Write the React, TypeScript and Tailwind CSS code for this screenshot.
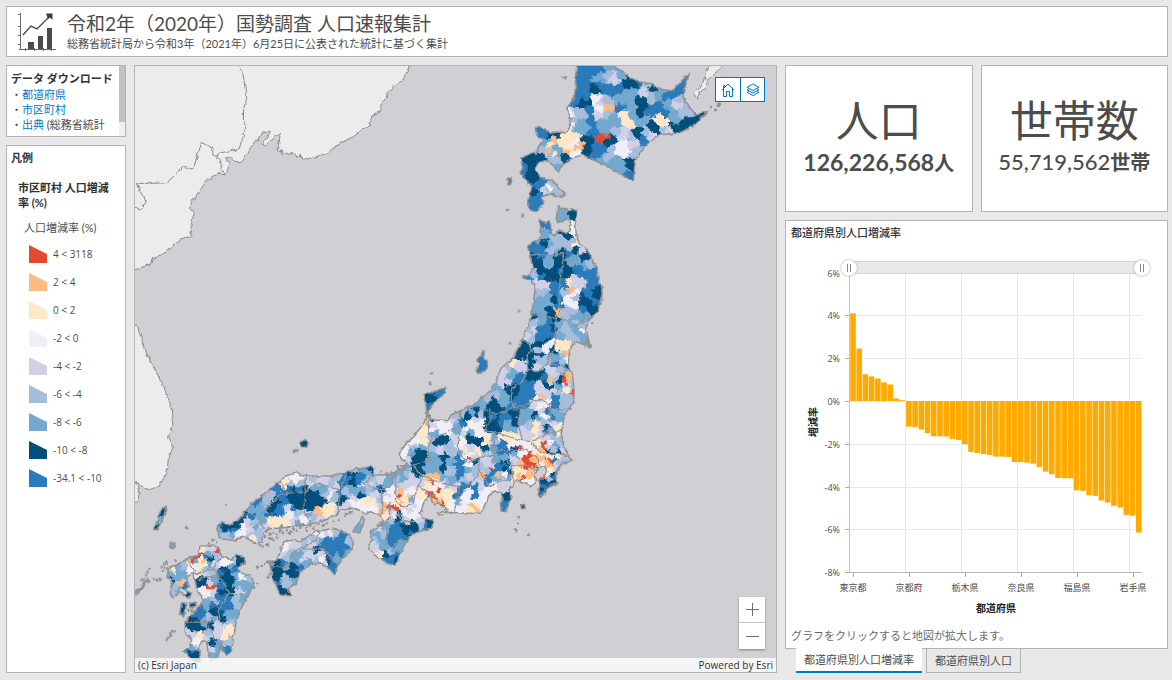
import React, { useMemo, useState } from "react";

type Point = [number, number];

const FILL: Record<string, string> = {
  R: "#e34a33",
  O: "#fdbb84",
  Y: "#fee8c8",
  W: "#f1eef6",
  L: "#d0d1e6",
  M: "#a6bddb",
  B: "#74a9cf",
  D: "#034e7b",
  N: "#2b7bba",
};

/* Relative reach of a municipality when cells are divided. */
const REACH: Record<string, number> = { R: 0.45, O: 0.75, Y: 0.95, W: 1.15, L: 1.1, M: 1.05, B: 1.05, D: 0.95, N: 1 };

const LEGEND = [
  ["R", "4 < 3118"],
  ["O", "2 < 4"],
  ["Y", "0 < 2"],
  ["W", "-2 < 0"],
  ["L", "-4 < -2"],
  ["M", "-6 < -4"],
  ["B", "-8 < -6"],
  ["D", "-10 < -8"],
  ["N", "-34.1 < -10"],
];

/* Map sheets: each has an origin on the map and is digitised at 3 units per map unit. */
const SHEET: Record<string, Point> = {
  A: [460, 60],
  B: [460, 230],
  C: [380, 370],
  D: [340, 440],
  E: [134, 440],
  F: [134, 60],
};

function trace(sheet: string, coords: string): Point[] {
  const [ox, oy] = SHEET[sheet];
  return coords
    .trim()
    .split(/\s+/)
    .map((pair) => {
      const [x, y] = pair.split(",").map(Number);
      return [ox + x / 3, oy + y / 3];
    });
}

const toPath = (pts: Point[], close = true) =>
  "M" + pts.map(([x, y]) => `${x.toFixed(1)} ${y.toFixed(1)}`).join("L") + (close ? "Z" : "");

const HONSHU: Point[] = [
  ...trace("A", "204,562 215,545 238,540 245,520 240,478 258,488 272,482 275,515 285,528 298,510 318,520 330,515 334,495 328,475 295,488 290,470 298,437 325,452 352,448 348,490 350,520 358,550 385,570 398,598"),
  ...trace("B", "412,120 422,165 428,190 418,235 405,255 395,262 385,275 378,300 388,330 392,350 375,345 352,335 335,350 328,380 326,405 338,430 344,480"),
  ...trace("C", "582,100 565,120 552,150 545,190 550,220 562,250 580,270 550,282 533,305 532,340 505,352 488,380 474,375 482,345 478,330 495,315 500,295 488,290 472,300 465,320 468,335 455,352 440,340 410,330 400,345 388,360 398,380 388,400 380,425 365,420 362,400 372,385 365,365 345,362 330,375 318,400 305,430 260,430 200,427 178,436 172,430 205,418 190,410 172,395 166,405 158,395 154,378 140,385 132,400 122,430 128,445 160,450 158,475 130,480 95,495"),
  ...trace("D", "200,305 185,335 168,378 140,368 115,350 90,330 85,320 98,300 92,275 110,262 130,245 125,232 118,222 95,215 75,222 60,210 40,205"),
  ...trace("E", "658,205 625,210 600,230 580,238 540,250 510,255 470,262 430,265 400,268 388,285 385,305 370,310 350,300 330,290 305,300 280,300 258,293 250,265 262,245 290,255 320,235 335,215 350,195 400,155 440,125 455,108 490,98 515,108 540,108 590,108 630,98 660,88 690,85 715,78 722,90 718,108"),
  ...trace("D", "110,105 140,105 165,100 175,85 195,92 190,80 202,72 180,45"),
  ...trace("C", "60,250 75,228 105,195 130,165 142,135 140,110 132,75 160,65 200,52 198,68 175,85 165,95 150,120 148,145 165,150 205,152 215,135 245,120 290,98 330,65 350,30 365,-5"),
  ...trace("B", "125,415 160,385 178,350 205,290 215,255 222,215 228,170 215,150 192,145 190,138 212,135 220,110 212,75"),
];

const ISLANDS: Point[][] = [
  HONSHU,
  trace("A", "352,10 348,60 346,110 322,145 332,170 330,205 318,218 290,216 272,220 240,198 228,205 232,225 252,240 235,262 232,280 215,280 184,297 190,325 182,342 205,365 218,380 206,415 208,445 228,457 250,435 248,412 270,402 285,405 305,412 318,400 300,385 280,362 245,355 228,330 234,308 265,300 280,315 297,335 315,312 335,295 370,285 420,308 470,335 522,365 525,320 530,295 560,255 600,225 650,220 685,208 722,180 745,153 710,165 690,140 670,110 675,85 692,35 670,60 640,92 600,88 580,72 540,65 510,52 460,15"),
  trace("E", "445,320 455,305 480,300 500,305 545,275 600,265 650,285 660,310 655,330 625,355 612,380 605,405 585,385 560,368 525,375 500,400 488,430 465,445 475,468 440,465 430,440 418,420 412,385 408,370 430,360 440,335"),
  trace("E", "200,318 240,315 258,328 262,350 290,358 312,345 332,350 335,370 310,385 325,400 350,405 362,430 350,455 325,500 308,545 300,590 295,630 280,645 262,625 252,650 235,665 225,640 218,605 205,600 195,625 205,665 185,670 150,635 165,625 175,600 155,575 155,545 180,520 205,490 205,470 192,455 185,425 178,400 160,410 165,440 155,450 175,460 165,475 140,455 120,475 110,460 118,430 100,405 105,385 135,372 165,355 195,345"),
  trace("E", "690,232 692,245 678,278 658,275 675,250"),
  trace("B", "75,362 72,385 85,395 78,420 60,430 50,420 62,402 52,390"),
  trace("E", "98,198 92,225 86,240 72,272 60,268 72,240 80,212"),
  trace("E", "145,488 160,490 150,528 138,522"),
  trace("E", "168,492 185,486 188,498 170,504"),
  trace("E", "500,3 514,0 524,8 520,18 506,20"),
  trace("A", "145,355 158,352 154,372 148,374"),
  trace("C", "424,406 436,402 437,414 427,418"),
  trace("E", "110,310 122,312 120,326 112,324"),
  trace("E", "0,460 18,445 30,430 44,418 46,424 30,438 12,462 0,470"),
];

const ISLETS = [
  trace("E", "484,32 480,36 492,30 26,420 34,412 48,386 44,396 38,404 60,418 70,419 80,418 82,380 90,372 98,366 92,385 125,362 100,372 88,392 160,262 277,196 124,574 112,584 100,598 104,592 120,576 165,510 155,520 175,512 270,668 70,658 238,300 248,306 225,310 370,382 385,378 395,372 405,366 362,444 372,430 410,402 405,410 400,275 410,282 420,278 430,286 440,272 448,280 460,270 470,276 480,268 490,272 500,262 510,256 520,262 530,256 545,258 555,252 570,256 580,250 600,245 410,295 420,300 430,295 395,290 380,316 390,320 402,314 470,282 520,270 540,266 615,240 640,222 650,218 632,228"),
  trace("C", "155,10 152,42 420,444 416,460 408,480 448,494 446,496 55,290 65,288 5,305 20,312 38,308"),
  trace("A", "310,53 318,52 142,447 146,448 188,465 756,142 768,148 776,134 780,130"),
  trace("B", "178,242 152,339 392,262 398,280 384,330 390,346 376,352 426,170 428,210 384,342 380,336 388,352"),
].flat();

const CONTINENT: Point[][] = [
  trace("F", "-10,10 835,10 825,30 808,60 785,75 765,97 758,112 742,135 742,155 715,168 710,195 690,206 660,230 620,250 590,275 570,283 540,292 510,300 500,285 490,290 478,275 465,284 440,270 448,284 432,270 438,240 440,218 430,228 400,252 392,258 388,248 410,215 390,213 375,240 362,248 345,272 330,300 320,308 295,300 285,292 275,294 292,308 275,345 255,340 235,350 210,375 195,400 175,425 168,445 182,460 173,490 173,530 155,532 125,548 100,575 60,595 55,610 20,625 -10,632"),
  trace("F", "-10,800 8,795 18,820 32,860 55,912 90,978 112,1035 118,1095 105,1130 120,1160 105,1190 100,1240 75,1280 40,1290 8,1265 18,1300 10,1330 -10,1320"),
  trace("A", "795,10 770,40 745,55 740,85 720,95 715,115 703,100 720,85 735,55 750,15"),
];

const CONTINENT_LINES = [
  trace("F", "318,15 328,40 340,115 330,150 330,185 338,200 325,240 318,265 290,272 255,280 250,290 262,300 262,320 275,345"),
  trace("F", "250,290 238,285 238,265 205,248 190,290 182,320 165,325 145,320 130,340 100,368 60,370 12,370 20,395 38,425 20,450 0,440"),
];

const BORDERS: Point[][] = [
  ["B", "210,76 240,72 275,78 312,70 310,95 340,90 355,75 375,65"],
  ["B", "310,95 302,140 298,200 302,240 290,266 240,255 213,255"],
  ["B", "302,262 350,287 380,258"],
  ["B", "290,266 285,310 290,340 282,365 262,395 262,402 300,405 325,418"],
  ["B", "262,402 240,425 205,420 200,375 218,360 205,335 180,330"],
  ["B", "205,420 190,450 160,475 155,500 160,530 190,530 235,508 260,515 275,535 320,538"],
  ["C", "330,115 335,145 315,185 345,185 390,200 430,212"],
  ["C", "245,122 240,160 240,205 232,232 245,250 262,278 300,262"],
  ["C", "300,115 345,130 375,125 410,100"],
  ["C", "425,115 415,160 430,212 455,215 505,190 550,180"],
  ["C", "510,100 512,150 505,190"],
  ["C", "345,185 340,240 380,265 395,290 402,335"],
  ["C", "345,240 380,242 440,240 475,265 480,290"],
  ["C", "455,215 480,245 505,252 545,250 570,262"],
  ["C", "395,290 440,285 468,300"],
  ["C", "240,130 240,170 185,195 160,200 145,235 150,270 100,285"],
  ["C", "145,135 148,190 160,200"],
  ["C", "100,285 130,320 115,350 100,400 70,410 48,395 50,300 100,285"],
  ["C", "130,320 190,340 240,350 265,345 295,320 300,262 345,255"],
  ["C", "240,350 225,425"],
  ["C", "298,300 330,348 390,325"],
  ["C", "115,350 150,365 155,380"],
  ["D", "170,95 150,140 125,150 70,130 95,112"],
  ["D", "125,150 130,190 128,225"],
  ["D", "150,185 150,230 145,245 110,262"],
  ["D", "150,200 175,215 185,240 222,248"],
  ["D", "145,245 140,310 155,322 185,300 200,303"],
  ["E", "515,108 515,160 510,210 530,250"],
  ["E", "440,125 460,160 440,165 385,220 380,240 390,268"],
  ["E", "460,160 515,155 550,130 620,150 612,225"],
  ["E", "620,150 640,98"],
  ["E", "340,235 335,215"],
  ["E", "412,385 455,378 470,360 480,335 500,325 545,328 570,325 590,350 612,375"],
  ["E", "490,330 545,302 560,275"],
  ["E", "262,352 240,385 200,400 178,400"],
  ["E", "240,385 270,430 285,460 350,462"],
  ["E", "285,460 255,510 260,540 220,548 155,545"],
  ["E", "220,548 235,575 240,600 275,630"],
  ["E", "160,357 185,395"],
  ["E", "192,420 250,405 262,420"],
].map(([s, c]) => trace(s, c));

/* Municipality centres; the letter is the legend class. */
const CENTRES: [string, string][] = [
  ["A", "N370,40 N400,30 N370,80 N430,30 B420,55 M445,45 B440,25 L465,55 B485,45 D500,70 D525,75 D515,50 N480,80 N450,90 N380,110 D385,125 D360,130 D410,90 N350,125 N420,75 B500,110 B480,125 B520,95 L555,95 M560,75 M575,110 D580,85 N545,75 B595,105 N620,110 N650,95 B610,85 N675,80 M690,130 M660,120 L655,135 M670,155 M690,165 B625,130 N600,145 N580,150 D545,145 D540,160 D545,125 B520,140 B560,175 N570,160 L420,130 W410,120 M440,125 W420,145 O440,140 O455,145 M440,160 L415,160 M370,165 M350,160 M340,180 W328,165 W330,195 B350,210 B370,205 B365,185 N395,180 N400,220 N390,150 B430,195 B450,190 B440,210 B460,170 B475,190 N480,140 Y490,165 Y500,180 Y510,192 B540,190 B520,165 Y600,175 Y610,190 D580,195 D590,210 B640,160 B650,185 N620,160 D640,200 D670,195 D690,180 D715,172 M610,210 L628,210 M560,215 L575,225 N550,235 D535,210 D535,225 L500,210 L490,230 L520,250 M530,275 W500,245 W490,265 M470,215 M515,235 R430,235 R442,230 R420,238 D445,248 D460,240 N410,260 N430,270 D385,240 D380,265 D385,280 N410,285 M455,270 W480,270 B465,300 B480,320 B450,310 B495,325 M440,295 M455,285 N505,345 D510,315 B430,305 N400,290"],
  ["A", "O285,235 Y320,225 Y335,240 Y345,225 Y305,245 Y325,260 W345,250 W350,280 O325,275 O350,262 O365,255 Y270,255 B290,265 B295,285 O265,270 M250,270 B255,250 D290,222 D270,225 N240,210 N250,220 B270,240 Y285,283 M275,280 D318,292 M290,300 B300,320 D235,290 D215,290 D215,320 D210,345 D225,360 D205,300 N190,330 N193,345 D245,292 N235,375 D225,395 N220,420 N225,445 N240,410 M262,390 W272,380 L258,395 M275,375 M300,398 M285,385 N248,370 N250,490 N265,495 B250,510 B255,535 B270,550 B240,530 M285,540 M300,555 M280,570 D258,545 N225,560 N235,575 N215,555 B300,460 B315,465 D335,460 D345,465 W345,500 W342,515 D318,522 D330,530 M310,540 M325,560 Y348,552 M340,545 D350,570 L365,572 B295,575 N325,580 D305,578 N150,362"],
  ["B", "D230,95 D240,120 D220,85 B270,90 B272,105 D290,85 D300,100 D285,120 N300,125 N240,70 D260,140 D295,145 M218,130 N250,140 N205,142 D275,130 D318,115 D320,135 D370,85 D380,80 B335,95 B350,90 M385,100 B375,105 N360,115 N385,130 N400,150 N410,130 N360,135 N395,175 D405,185 D412,190 N385,190 D375,205 D370,215 D385,215 N400,210 D400,240 D390,232 N375,240 Y328,155 O335,180 L350,150 L345,165 L360,155 N315,165 W340,190 W325,215 W340,225 M318,190 M350,205 M330,240 M345,245 M320,255 B340,265 B355,255 B365,270 B380,260 N310,155 M240,185 L245,170 L240,160 L260,165 M255,180 B265,200 B250,215 B240,230 B270,225 B235,245 N280,165 N285,180 N295,205 D283,207 N295,225 O293,240 O298,255 D265,240 D280,250 D290,265 B250,248"],
  ["B", "M225,270 D222,262 B245,270 N270,275 N265,290 D280,292 M215,290 M210,305 L205,318 M215,325 L220,300 N240,305 N255,310 N270,310 N235,325 N260,325 D240,345 D262,330 W270,340 W260,350 M240,360 D190,345 D185,365 D200,360 D210,380 D215,400 M240,385 M245,400 L235,410 M255,390 D240,375 D278,355 B300,280 M310,290 M320,300 B340,290 B355,300 M345,275 B365,320 M375,290 W375,300 B385,310 M330,320 M350,325 B310,320 Y305,345 Y320,345 Y310,335 O320,370 Y300,355 M310,375 D290,365 B300,385 B285,380 M310,395 W320,385 B315,405 N295,400 D325,412 R312,434 O328,432 O330,445 R318,458 Y322,478 R335,488 B325,420 M305,420 L270,420 L280,430 N255,440 D235,440 D215,440 D245,432 M290,450 D300,455 L270,460 O272,453 L245,475 L260,490 L235,465 D275,470 D262,465 N220,460 N200,470 L285,480 M295,490 O248,500 W235,520 L250,510 L225,525 B295,470 N290,500 N285,515 N295,530 M315,500 M325,515 M320,530 L320,468 M335,470 M330,505 W260,520 N180,440 N170,450 B160,425 L175,410 L190,410 Y158,405 M150,415 L135,430 L130,460 L145,460 D145,473 B150,440 N185,490 N180,510 D170,475 N200,495 D165,490 N215,490 B120,485 M115,495 B130,500 B110,470 D105,520 D95,520 M85,510 B70,520 B50,525 D55,533 N200,520 N68,390 N65,415"],
  ["C", "D345,100 D350,120 D340,95 B370,90 B325,90 B300,108 D292,118 B280,130 D262,140 M250,135 N240,150 D290,130 D325,130 M305,130 N335,135 N400,115 N420,105 N380,140 D400,130 N365,160 D350,160 D345,175 D325,180 D355,180 D330,160 B380,165 B400,180 B430,150 B440,130 M450,170 D405,160 L430,185 B455,130 B470,145 D465,135 W480,110 W490,105 L485,120 N505,125 N515,140 B520,130 B540,140 M550,110 L515,160 Y472,160 Y470,180 Y535,182 L485,180 D505,170 N500,185 M490,155 L450,195 B520,185 M515,200 L435,200 W500,140 B350,200 M350,215 Y380,198 Y400,195 Y410,200 N355,225 N370,220 Y360,205 W410,215 Y390,210 W395,230 D402,237 N380,245 N365,245 B410,250 R420,235 W445,225 W425,245 Y465,215 W475,225 R493,220 R492,235 O485,240 Y480,248 L510,230 M520,240 B530,225 M540,215 L500,205 W510,215 D515,243 D530,250 R450,255 R440,262 O460,268 R455,280 R445,285 R465,282 R435,290 O425,283 O480,265 O490,262 R503,267 R510,272 O500,275 Y515,260 Y535,260 L555,255 M550,265 N525,270 M545,275 Y490,280 Y480,280 O505,285 D515,315 Y510,300 W500,310 R493,322 M510,325 D495,335 N525,325 D520,340 N500,350 D485,360 N482,372 B540,290 L530,290"],
  ["C", "D390,275 L400,290 B375,265 Y410,300 O418,318 Y430,310 O440,320 W445,335 Y405,322 B395,315 O445,305 R432,320 D390,310 L400,270 L315,270 L325,265 B345,270 N355,290 L335,290 R333,295 M325,300 N340,310 D375,295 N370,285 N325,320 N325,340 B350,325 O352,315 W380,310 O312,315 D365,280 M370,320 W260,175 W275,165 W300,160 L290,150 L250,190 W250,215 W240,230 N250,165 B270,185 D290,215 D300,212 D298,225 W315,190 Y325,200 Y320,215 L330,220 W300,190 D270,205 L270,235 Y262,245 R263,265 R270,266 W258,258 W276,258 W268,280 Y290,240 Y300,250 L290,255 D320,235 B335,235 M310,245 L280,265 N240,275 N235,260 N230,290 N245,295 B265,300 L270,320 M285,310 D290,275 N240,310 M260,330 N260,345 L280,330 M300,285 B245,250 W180,160 W200,165 W155,180 L220,155 B225,165 M235,150 M215,140 W200,180 L160,165 B235,180 B160,190 D150,75 D160,90 N175,75 N185,65 N150,100 D145,90 B155,125 D160,140 N148,115 O140,150 Y130,190 Y125,180 Y135,210 Y128,220 W110,215 W120,170 W100,205"],
  ["C", "M105,232 D115,243 B95,250 W75,245 W70,260 D130,265 L85,270 D105,268 B125,228 M150,205 D185,210 D200,205 D175,218 M160,235 M200,235 M220,250 M215,225 B160,255 B150,275 B145,295 D195,265 D190,290 B170,300 D105,300 D115,310 D120,290 B210,275 L225,205 B190,320 M205,305 M225,300 B215,330 B80,290 M85,305 B70,320 B60,310 M55,330 B45,315 L95,320 B175,275 L180,240 L120,335 O150,325 O175,322 Y150,345 R160,340 W170,335 R177,362 Y165,360 R152,372 R168,382 O165,390 W158,355 Y190,362 Y172,372 Y180,375 O180,395 R190,400 Y205,385 Y210,365 M200,345 W215,400 Y195,412 N235,365 N230,375 B235,395 L220,355 Y200,400 W190,345 W260,390 W250,410 W240,420 W270,370 N290,365 N290,350 L300,350 N285,375 O280,410 Y290,400 Y272,415 W310,380 W320,365 W340,350 L375,350 L365,345 D375,385 D385,380 N370,395 N372,415 W300,395 L75,345 L95,345 W95,360 R60,378 O65,370 O60,390 Y70,385 W80,375 O90,380 Y75,400 B95,385 L100,400 Y120,375 W115,400 W100,420 W90,440 W110,390 L90,425 L85,450 D70,465 D110,465 D100,470 L120,455 M125,465 D150,462 N140,465 N60,480 N50,495 N90,490 D85,480 W30,365 L20,370 D430,410"],
  ["D", "B185,120 M205,110 L210,125 Y195,165 Y170,185 W150,150 L145,165 W155,180 O132,200 O130,215 R163,205 R155,198 R170,208 W145,175 L160,215 W165,225 Y140,225 M155,240 D180,235 D175,225 N165,260 N160,280 N180,270 N180,250 N165,300 N150,290 W225,220 L225,195 M190,240 B115,280 M130,285 M110,300 B125,315 B140,320 B120,295 L105,320 B185,310 B190,325 N175,345 N160,355 D170,355 N140,355 D140,345 M150,335 B160,330 L118,265 B130,258 Y125,348 D210,290 D205,275 N200,295 N155,310 D195,262 W200,220 D97,88 M110,130 L120,125 D125,150 N118,140 B140,135 L95,135 L110,160 B100,150 M120,175 L115,190 Y105,188"],
  ["E", "B700,100 N690,110 M700,120 L690,130 D645,100 N640,110 D660,128 M650,85 N680,120 M610,115 M600,105 L560,115 M540,118 L530,125 L580,125 M590,130 N630,125 L600,145 D620,180 N620,160 D630,175 M640,160 B650,150 B670,155 D680,165 L665,178 W660,188 B690,150 M710,150 L720,160 Y695,185 W720,200 W690,210 W670,200 L640,195 M605,170 Y455,125 Y450,140 W490,115 W480,108 M470,130 D480,150 M500,130 N465,145 N500,145 D510,150 N435,145 N440,165 D425,185 M400,190 B380,200 N370,190 M410,170 N450,160 D480,180 D500,185 D470,175 N455,185 D495,200 L465,205 N440,210 N445,220 D410,210 N405,225 B390,215 W470,225 N480,210 M490,220 D530,170 D540,190 D525,205 D550,185 D545,165 B550,150 B570,150 M580,160 Y575,200 Y580,215 O553,213 O555,220 M540,230 B525,225 W510,238 L520,215 Y600,205 Y590,232 L560,240 D570,190 W590,165 L610,210 Y410,240 Y430,245 Y450,240 Y460,255 Y425,255 L395,260 L480,245 B445,265 B490,250 B385,240 M375,270 B365,260 M360,250 M380,290 L345,265 Y357,295 L340,240 D330,225 N350,235 B345,205 D325,240 D310,260 D290,258 D275,262 N300,270 N285,275 B260,270 M265,285 M280,285 W320,280 W330,265 W310,290 M350,290 B300,285 D512,10 B680,255 M685,240 D88,215 D68,262 B76,245 D150,505 D175,495"],
  ["E", "W460,310 W455,325 L470,320 L490,315 L450,340 M515,310 L530,310 M475,335 B480,345 M460,350 W560,280 L575,275 W590,270 M605,275 B560,305 N580,305 N570,315 M545,300 N600,320 N620,310 N640,320 N620,340 N595,340 D545,332 N630,290 M655,295 B645,335 B610,352 M650,312 L530,330 M515,325 B500,345 L510,355 L540,350 W565,355 L560,345 M550,360 L575,360 B520,365 N590,355 N600,380 N605,390 D585,358 B490,360 D430,370 D440,390 D425,385 N450,370 D480,380 D475,400 D465,395 N495,385 B460,382 M455,420 M460,435 D425,405 D430,415 N425,430 D485,410 D450,460 D440,450 B480,420 B410,375 Y205,325 R190,350 R180,355 R200,345 O170,352 Y200,362 O210,360 L225,325 L240,322 B225,340 D232,352 R250,332 M245,345 N215,350 Y205,375 Y198,390 B190,365 W175,380 W180,390 M150,380 B130,385 Y115,390 B145,395 M210,390 B225,375 M235,390 L215,400 D320,358 D325,370 W270,370 W285,370 D270,385 D280,395 N265,395 L250,375 B290,375 M300,360 N300,390 B305,405 W325,408 M340,410 B330,430 B340,440 B310,440 L315,450 D290,425 D285,440 D290,450 D270,420 N265,430 N260,445 B240,425 D212,425 L230,430 R235,443 R225,440 R243,440 W220,455 L240,455 N250,470 N235,490 B225,490 D265,455 N270,470 N285,490 N290,500 N265,500 M310,480 M315,495 B325,480 M240,480 N210,515 D235,515 D250,520 B220,510 N205,525 M225,530 B240,535 D265,535 B285,530 B300,520 M290,545 L250,555 D195,555 D200,565 D230,555 D175,560 B215,550 L160,580 L180,585 Y200,585 W190,605 M225,580 L250,580 Y280,575 Y290,570 Y275,590 L265,560 D240,605 B255,610 M280,610 M290,600 L228,630 N275,630 D170,640 D180,650 N160,640 B175,625 L220,590 B250,640 B235,645 B110,400 D110,425 B130,410 O143,432 B135,450 M120,440 L150,455 D170,465 N150,440 M125,462 B112,318 B20,445"],
];

/* Keep the part of a cell on a's side of the line that divides a from b at the given share. */
function clip(poly: Point[], a: Point, b: Point, share: number): Point[] {
  const nx = b[0] - a[0];
  const ny = b[1] - a[1];
  const k = nx * (a[0] + nx * share) + ny * (a[1] + ny * share);
  const out: Point[] = [];
  poly.forEach((p, i) => {
    const q = poly[(i + 1) % poly.length];
    const dp = nx * p[0] + ny * p[1] - k;
    const dq = nx * q[0] + ny * q[1] - k;
    if (dp <= 0) out.push(p);
    if (dp < 0 !== dq < 0 && dp !== dq) {
      const t = dp / (dp - dq);
      out.push([p[0] + (q[0] - p[0]) * t, p[1] + (q[1] - p[1]) * t]);
    }
  });
  return out;
}

function buildCells() {
  const sites = CENTRES.flatMap(([sheet, list]) =>
    list.split(" ").map((s) => ({ k: s[0], p: trace(sheet, s.slice(1))[0] }))
  );
  const byClass: Record<string, string> = {};
  sites.forEach((s) => {
    const [x, y] = s.p;
    let poly: Point[] = [[x - 14, y - 14], [x + 14, y - 14], [x + 14, y + 14], [x - 14, y + 14]];
    for (const o of sites) {
      if (o === s || Math.abs(o.p[0] - x) > 32 || Math.abs(o.p[1] - y) > 32) continue;
      if (o.p[0] === x && o.p[1] === y) continue;
      poly = clip(poly, s.p, o.p, REACH[s.k] / (REACH[s.k] + REACH[o.k]));
      if (!poly.length) break;
    }
    if (poly.length) byClass[s.k] = (byClass[s.k] ?? "") + toPath(poly);
  });
  return byClass;
}

function JapanMap() {
  const cells = useMemo(buildCells, []);
  const land = ISLANDS.map((i) => toPath(i)).join("");
  const borders = BORDERS.map((b) => toPath(b, false)).join("");
  return (
    <svg className="block h-full w-full" viewBox="135 66 642 606" preserveAspectRatio="xMidYMid slice" role="img" aria-label="市区町村 人口増減率">
      <defs>
        <clipPath id="land"><path d={land} /></clipPath>
        <filter id="rough" filterUnits="userSpaceOnUse" x="120" y="50" width="670" height="630" colorInterpolationFilters="sRGB">
          <feTurbulence type="fractalNoise" baseFrequency="0.22" numOctaves="2" seed="4" />
          <feDisplacementMap in="SourceGraphic" scale="6" xChannelSelector="R" yChannelSelector="G" />
        </filter>
        <filter id="coast" filterUnits="userSpaceOnUse" x="120" y="50" width="670" height="630" colorInterpolationFilters="sRGB">
          <feTurbulence type="fractalNoise" baseFrequency="0.2" numOctaves="2" seed="9" />
          <feDisplacementMap in="SourceGraphic" scale="4" xChannelSelector="R" yChannelSelector="G" />
        </filter>
      </defs>
      <rect x="100" y="40" width="720" height="660" fill="#d0cfd4" />
      <g filter="url(#coast)">
        <path d={CONTINENT.map((c) => toPath(c)).join("")} fill="#ececec" stroke="#8a8a8a" strokeWidth="1" />
        <path d={CONTINENT_LINES.map((c) => toPath(c, false)).join("")} fill="none" stroke="#8a8a8a" strokeWidth="1" />
      </g>
      <g filter="url(#coast)">
        <g clipPath="url(#land)">
          <path d={land} fill="#a6bddb" />
          <g filter="url(#rough)">
            {Object.entries(cells).map(([k, d]) => (
              <path key={k} d={d} fill={FILL[k]} stroke={FILL[k]} strokeWidth="0.4" />
            ))}
          </g>
        </g>
        <path d={borders} fill="none" stroke="#929292" strokeWidth="1.2" strokeLinejoin="round" />
        <path d={land} fill="none" stroke="#929292" strokeWidth="1.5" strokeLinejoin="round" />
        {ISLETS.map(([x, y], i) => (
          <circle key={i} cx={x} cy={y} r={i % 3 === 0 ? 1.7 : 1.2} fill="#929292" />
        ))}
      </g>
    </svg>
  );
}

const RATES = [
  4.1, 2.45, 1.25, 1.15, 1.05, 0.87, 0.77, 0.12, 0.04, -1.2, -1.22, -1.33, -1.5, -1.65, -1.65, -1.66, -1.78, -1.82, -2.02, -2.38, -2.43, -2.48, -2.52, -2.6, -2.6, -2.62, -2.85, -2.86, -2.88, -2.93, -3.08, -3.3, -3.42, -3.6, -3.61, -3.61, -4.17, -4.2, -4.4, -4.43, -4.65, -4.75, -4.9, -4.98, -5.32, -5.36, -6.15,
];
const NAMES = ["東京都", "京都府", "栃木県", "奈良県", "福島県", "岩手県"];

function RateChart() {
  const x0 = 50;
  const step = 292 / 47;
  const y = (v: number) => 132 - v * 21.4;
  return (
    <svg viewBox="0 0 356 353" className="block w-full font-['Open_Sans','Noto_Sans_CJK_JP',sans-serif] text-[9px] text-[#4c4c4c]" role="img" aria-label="都道府県別人口増減率">
      {[6, 4, 2, 0, -2, -4, -6, -8].map((v) => (
        <g key={v}>
          <path d={`M${x0 - 5} ${Math.round(y(v)) + 0.5}H${x0}`} stroke="#aaa" />
          <path d={`M${x0} ${Math.round(y(v)) + 0.5}H342`} stroke={v === -8 ? "#b8b8b8" : "#e9e9e9"} />
          <text x="40" y={Math.round(y(v)) + 4} textAnchor="end" fill="currentColor">{v}%</text>
        </g>
      ))}
      {NAMES.map((n, i) => {
        const left = Math.round(x0 + i * 9 * step);
        const mid = Math.round(left + step / 2);
        return (
          <g key={n}>
            <path d={`M${left - 0.5} 4V303`} stroke={i === 0 ? "#c4c4c4" : "#e9e9e9"} />
            <path d={`M${mid + 0.5} 303v5`} stroke="#aaa" />
            <text x={mid} y="322" textAnchor="middle" fill="currentColor">{n}</text>
          </g>
        );
      })}
      {RATES.map((v, i) => (
        <rect key={i} x={x0 + i * step + 0.2} y={Math.min(y(v), 132)} width={step - 0.6} height={Math.abs(v) * 21.4} fill="#ffaa00" />
      ))}
      <text x="196" y="343" textAnchor="middle" fill="#222" className="text-[10px] font-bold">都道府県</text>
      <text transform="translate(17 153) rotate(-90)" textAnchor="middle" fill="#222" className="text-[10px] font-bold">増減率</text>
    </svg>
  );
}

const thumb =
  "pointer-events-none absolute inset-x-0 top-[-1px] m-0 h-4 w-full appearance-none bg-transparent [&::-webkit-slider-thumb]:pointer-events-auto [&::-webkit-slider-thumb]:h-4 [&::-webkit-slider-thumb]:w-4 [&::-webkit-slider-thumb]:appearance-none [&::-webkit-slider-thumb]:rounded-full [&::-webkit-slider-thumb]:bg-white [&::-webkit-slider-thumb]:bg-[linear-gradient(90deg,transparent_6px,#888_6px,#888_7px,transparent_7px,transparent_9px,#888_9px,#888_10px,transparent_10px)] [&::-webkit-slider-thumb]:bg-[length:16px_8px] [&::-webkit-slider-thumb]:bg-center [&::-webkit-slider-thumb]:bg-no-repeat [&::-webkit-slider-thumb]:shadow-[0_0_2px_#888]";

function RangeBar() {
  const [from, setFrom] = useState(0);
  const [to, setTo] = useState(46);
  return (
    <div className="relative mr-[17px] ml-[55px] h-[14px]">
      <div className="mx-2 h-[13px] border-y border-[#d4d4d4] bg-[#e9e9e9]" />
      <input type="range" aria-label="開始" min={0} max={46} value={from} onChange={(e) => setFrom(Math.min(+e.target.value, to))} className={thumb} />
      <input type="range" aria-label="終了" min={0} max={46} value={to} onChange={(e) => setTo(Math.max(+e.target.value, from))} className={thumb} />
    </div>
  );
}

function StatCard({ title, value, unit, bold }: { title: string; value: string; unit: string; bold?: boolean }) {
  return (
    <section className="flex h-[147px] flex-1 flex-col items-center border border-[#b3b3b3] bg-white pt-[28px]">
      <h2 className="text-[43px] leading-[54px]">{title}</h2>
      <p className={bold ? "text-[23px] leading-[28px] font-bold" : "text-[22px] leading-[28px] font-medium"}>
        {value}
        <span className="text-[20px] font-bold">{unit}</span>
      </p>
    </section>
  );
}

export default function App() {
  const [tab, setTab] = useState(0);
  return (
    <div className="flex h-screen min-h-[600px] flex-col gap-2 bg-[#e8e8e8] pt-[6px] pr-1 pb-[7px] pl-[6px] font-['Lato','Noto_Sans_CJK_JP',sans-serif] text-[#4c4c4c]">
      <header className="flex h-[51px] shrink-0 items-center border border-[#b3b3b3] bg-white pl-[10px]">
        <svg width="40" height="40" viewBox="0 0 40 40" fill="none" aria-hidden="true">
          <path d="M3.500 1V38M2 37.500H39M1 2.500h3M1 14.500h3M1 23.500h3M1 32.500h3M8.500 36v3M17.500 36v3M26.500 36v3M34.500 36v3" stroke="#6a6a6a" />
          <path d="M11 30h6v7h-6zM21 24h5v13h-5zM30 16h5v21h-5z" fill="#4a4a4a" />
          <path d="M6 23L14 14L20 17L33 4" stroke="#4a4a4a" strokeWidth="1.400" />
          <path d="M29 1.500H35.500V8L33 5.500L31 7z" fill="#3c3c3c" />
        </svg>
        <div className="ml-[10px]">
          <h1 className="text-[19px] leading-[25px] font-normal text-[#4c4c4c]">令和2年（2020年）国勢調査 人口速報集計</h1>
          <p className="text-[11px] leading-[16px]">総務省統計局から令和3年（2021年）6月25日に公表された統計に基づく集計</p>
        </div>
      </header>

      <main className="flex min-h-0 flex-1 gap-2">
        <aside className="flex w-[120px] shrink-0 flex-col gap-2">
          <section className="flex h-[72px] shrink-0 overflow-hidden border border-[#b3b3b3] bg-white">
            <div className="min-w-0 flex-1 pt-1 pl-1 text-[11px] leading-[15px] whitespace-nowrap">
              <h2 className="text-[11px] leading-[17px] font-bold text-[#323232]">データ ダウンロード</h2>
              <ul>
                <li>・<a href="#prefecture" className="text-[#0079c1]">都道府県</a></li>
                <li>・<a href="#city" className="text-[#0079c1]">市区町村</a></li>
                <li>・<a href="#source" className="text-[#0079c1]">出典</a> (総務省統計</li>
              </ul>
            </div>
            <div className="w-[6px] shrink-0 bg-[#f1f1f1]"><div className="h-[56px] bg-[#c1c1c1]" /></div>
          </section>
          <section className="flex-1 border border-[#b3b3b3] bg-white">
            <h2 className="pt-1 pl-1 text-[11px] leading-4 font-bold text-[#323232]">凡例</h2>
            <h3 className="mt-[14px] pr-2 pl-[11px] text-[11px] leading-[15px] font-bold text-[#323232]">市区町村 人口増減率 (%)</h3>
            <p className="mt-[10px] pl-[17px] text-[11px] leading-4">人口増減率 (%)</p>
            <ul className="mt-1 font-['Open_Sans',sans-serif] text-[10px]">
              {LEGEND.map(([k, label]) => (
                <li key={k} className="flex h-7 items-center gap-[6px] pl-[22px]">
                  <svg width="18" height="18" viewBox="0 0 18 18" aria-hidden="true"><path d="M0 0L18 9V18H0Z" fill={FILL[k]} /></svg>
                  {label}
                </li>
              ))}
            </ul>
          </section>
        </aside>

        <section className="relative min-w-0 flex-1 overflow-hidden border border-[#b3b3b3]">
          <JapanMap />
          <div className="absolute top-[11px] right-[11px] flex border border-[#0079c1] bg-white">
            <button aria-label="ホーム" className="flex h-[23px] w-6 items-center justify-center">
              <svg width="14" height="14" viewBox="0 0 14 14" fill="none" stroke="#0079c1"><path d="M.7 7.300L7 1l6.300 6.300M2.500 6v7.500H5.500V8.500h3v5h3V6M2.500 5V2.500H4V4" /></svg>
            </button>
            <button aria-label="レイヤー" className="flex h-[23px] w-6 items-center justify-center border-l border-[#0079c1]">
              <svg width="14" height="14" viewBox="0 0 14 14" fill="none" stroke="#0079c1"><path d="M7 1l6 3.300-6 3.200L1 4.300zM2.800 5.700L1 6.800l6 3.200 6-3.200-1.800-1.100M2.800 8.200L1 9.300l6 3.300 6-3.300-1.800-1.100" /></svg>
            </button>
          </div>
          <div className="absolute right-[11px] bottom-[23px] flex flex-col bg-white shadow-[0_1px_2px_#00000066]">
            <button aria-label="拡大" className="flex h-[26px] w-[26px] items-center justify-center border-b border-[#c8c8c8]">
              <svg width="13" height="13" viewBox="0 0 13 13" stroke="#6e6e6e"><path d="M6.500 0v13M0 6.500h13" /></svg>
            </button>
            <button aria-label="縮小" className="flex h-[26px] w-[26px] items-center justify-center">
              <svg width="13" height="13" viewBox="0 0 13 13" stroke="#6e6e6e"><path d="M0 6.500h13" /></svg>
            </button>
          </div>
          <footer className="absolute inset-x-0 bottom-0 flex h-[14px] justify-between bg-white/80 px-[3px] font-['Open_Sans',sans-serif] text-[10px] leading-[14px] text-[#323232]">
            <span>(c) Esri Japan</span>
            <span>Powered by Esri</span>
          </footer>
        </section>

        <div className="flex w-[383px] shrink-0 flex-col">
          <div className="mb-2 flex gap-2">
            <StatCard title="人口" value="126,226,568" unit="人" bold />
            <StatCard title="世帯数" value="55,719,562" unit="世帯" />
          </div>
          <section className="flex min-h-0 flex-1 flex-col border border-[#b3b3b3] bg-white">
            <h2 className="mb-[20px] pt-1 pl-[5px] text-[11px] leading-4 font-medium text-[#323232]">都道府県別人口増減率</h2>
            <div className="min-h-0 flex-1">
              <RangeBar />
              <div className="-mt-[6px] pr-[11px] pl-[14px]"><RateChart /></div>
            </div>
            <p className="pb-1 pl-[5px] text-[11px] leading-[17px] text-[#6a6a6a]">グラフをクリックすると地図が拡大します。</p>
          </section>
          <div role="tablist" className="flex h-6 shrink-0 gap-1 pl-[11px] text-[11px]">
            {["都道府県別人口増減率", "都道府県別人口"].map((label, i) => (
              <button
                key={label}
                role="tab"
                aria-selected={tab === i}
                onClick={() => setTab(i)}
                className={
                  tab === i
                    ? "relative -mt-px h-[25px] border-b-2 border-[#0079c1] bg-white px-2 pt-[2px]"
                    : "h-6 border border-t-0 border-[#b3b3b3] bg-[#e8e8e8] px-2 pt-px"
                }
              >
                {label}
              </button>
            ))}
          </div>
        </div>
      </main>
    </div>
  );
}
